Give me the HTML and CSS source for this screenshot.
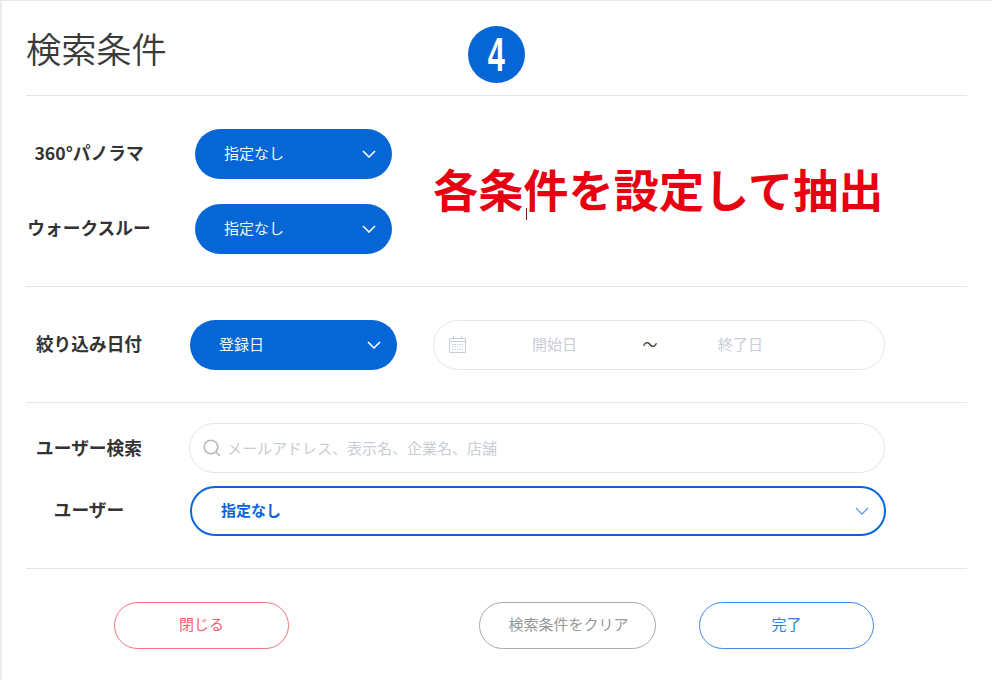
FILE: index.html
```html
<!DOCTYPE html>
<html lang="ja">
<head>
<meta charset="utf-8">
<title>検索条件</title>
<link rel="stylesheet" href="styles.css">
</head>
<body>
<div class="panel">
  <header class="head"><h1 class="title">検索条件</h1></header>
  <section class="sec sec-a">
    <div class="row row-a">
      <span class="label">360°パノラマ</span>
      <div class="select select-a"><span>指定なし</span><svg class="chev" viewBox="0 0 14 8"><path d="M1 1l6 6 6-6"/></svg></div>
    </div>
    <div class="row row-a">
      <span class="label">ウォークスルー</span>
      <div class="select select-a"><span>指定なし</span><svg class="chev" viewBox="0 0 14 8"><path d="M1 1l6 6 6-6"/></svg></div>
    </div>
  </section>
  <section class="sec sec-b">
    <div class="row row-b">
      <span class="label">絞り込み日付</span>
      <div class="select select-b"><span>登録日</span><svg class="chev" viewBox="0 0 14 8"><path d="M1 1l6 6 6-6"/></svg></div>
      <div class="field date">
        <svg class="cal" viewBox="0 0 17 17"><path d="M.5 2.5h16v14H.5zM.5 5.5h16M4.5 0v3M12.5 0v3"/><path class="dots" d="M3 8.5h11M3 11h11M3 13.5h11"/></svg>
        <span class="ph ph-start">開始日</span>
        <span class="tilde">～</span>
        <span class="ph ph-end">終了日</span>
      </div>
    </div>
  </section>
  <section class="sec sec-c">
    <div class="row row-b">
      <span class="label">ユーザー検索</span>
      <div class="field search">
        <svg class="mag" viewBox="0 0 18 18"><circle cx="8" cy="8" r="6.8"/><path d="M13 13l4 4"/></svg>
        <span class="ph">メールアドレス、表示名、企業名、店舗</span>
      </div>
    </div>
    <div class="row row-b">
      <span class="label">ユーザー</span>
      <div class="select-outline"><span>指定なし</span><svg class="chev chev-o" viewBox="0 0 14 8"><path d="M1 1l6 6 6-6"/></svg></div>
    </div>
  </section>
  <footer class="foot">
    <button class="btn btn-close">閉じる</button>
    <button class="btn btn-clear">検索条件をクリア</button>
    <button class="btn btn-done">完了</button>
  </footer>
</div>
<div class="badge"><span class="badge-num">4</span></div>
<div class="note">各条件を設定して抽出</div>
<div class="caret"></div>
</body>
</html>
```
FILE: styles.css
```css
* { box-sizing: border-box; }
html, body { margin: 0; padding: 0; }
body {
  width: 992px;
  height: 680px;
  overflow: hidden;
  background: #fff;
  font-family: "Noto Sans CJK JP", "Noto Sans", sans-serif;
  color: #333;
  position: relative;
}
.panel {
  height: 680px;
  border-top: 1px solid #e8e8e8;
  border-left: 2px solid #ececec;
  padding: 0 25px 0 24px;
  box-sizing: content-box;
  width: 941px;
}
.head {
  border-bottom: 1px solid #e6e6e6;
  box-sizing: content-box;
  height: 94px;
}
.title {
  margin: 0;
  padding-top: 21px;
  font-size: 35.2px;
  line-height: 52px;
  font-weight: 350;
  color: #3a3a3a;
}
.sec { border-bottom: 1px solid #e6e6e6; box-sizing: content-box; }
.sec-a { height: 157px; padding-top: 33px; display: flex; flex-direction: column; gap: 25px; }
.sec-b { height: 82px; padding-top: 33px; }
.sec-c { height: 145px; padding-top: 20px; display: flex; flex-direction: column; gap: 13px; }
.row { display: flex; align-items: center; height: 50px; }
.label {
  width: 126px;
  padding-bottom: 4px;
  text-align: center;
  font-size: 17.7px;
  font-weight: 700;
  color: #333;
  white-space: nowrap;
}
.sec-c .row:first-child .label { padding-bottom: 2px; }
.row-a .label { margin-right: 43px; }
.row-b .label { margin-right: 38px; }
.select {
  height: 50px;
  border-radius: 25px;
  background: #0666d6;
  color: #f2f7fd;
  font-size: 15px;
  display: flex;
  align-items: center;
  justify-content: space-between;
}
.select span, .select-outline span { margin-top: -4px; }
.select-a { width: 197px; padding: 0 16px 0 29px; }
.select-b { width: 207px; padding: 0 16px 0 29px; }
.chev { width: 14px; height: 8px; fill: none; stroke: #fff; stroke-width: 1.6; display: block; }
.field {
  height: 50px;
  border: 1px solid #e4e6ea;
  border-radius: 25px;
  background: #fff;
  display: flex;
  align-items: center;
}
.date { width: 452px; margin-left: 36px; padding-left: 15px; }
.cal { width: 17px; height: 17px; fill: none; stroke: #c6ccd8; stroke-width: 1; margin-top: -2px; }
.cal .dots { stroke-dasharray: 1.5 1; }
.ph { font-size: 15px; color: #c9cdd6; white-space: nowrap; margin-top: -4px; }
.search .ph { margin-top: -2px; }
.ph-start { margin-left: 66px; }
.tilde { margin-left: 60px; width: 26px; font-size: 15px; color: #444; text-align: center; margin-top: -4px; }
.ph-end { margin-left: 55px; }
.search { width: 696px; margin-left: -1px; padding-left: 13px; }
.mag { width: 18px; height: 18px; fill: none; stroke: #b4b7bd; stroke-width: 1.6; margin-right: 6px; }
.select-outline {
  width: 696px;
  height: 50px;
  border: 2px solid #0a66d8;
  border-radius: 25px;
  padding: 0 15px 0 29px;
  font-size: 15px;
  font-weight: 700;
  color: #0a66d8;
  display: flex;
  align-items: center;
  justify-content: space-between;
  background: #fff;
}
.chev-o { stroke: #5f9ce6; stroke-width: 1.3; }
.foot { display: flex; padding: 33px 0 0 88px; }
.btn {
  height: 47px;
  border-radius: 24px;
  background: #fff;
  font-family: inherit;
  font-size: 15px;
  padding: 0 0 4px;
}
.btn-close { width: 175px; border: 1px solid #f5747f; color: #f0636e; margin-right: 190px; }
.btn-clear { width: 177px; border: 1px solid #ababab; color: #979797; margin-right: 43px; padding-left: 2px; }
.btn-done { width: 175px; border: 1px solid #3d8ae6; color: #2f7fe0; }
.badge {
  position: absolute;
  left: 468px;
  top: 26px;
  width: 57px;
  height: 57px;
  border-radius: 50%;
  background: #0666d6;
  display: flex;
  align-items: center;
  justify-content: center;
}
.badge-num {
  font-family: "Liberation Sans", sans-serif;
  font-weight: 700;
  font-size: 48px;
  line-height: 1;
  color: #fff;
  transform: scaleX(0.64);
}
.note {
  position: absolute;
  left: 433px;
  top: 156px;
  font-size: 45.2px;
  line-height: 66px;
  font-weight: 700;
  color: #e60012;
  white-space: nowrap;
}
.caret {
  position: absolute;
  left: 526px;
  top: 208px;
  width: 1px;
  height: 12px;
  background: #7a1a1a;
}
```
